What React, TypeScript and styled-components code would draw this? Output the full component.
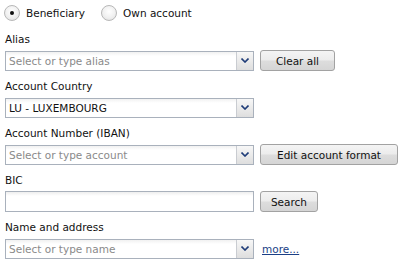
import React, { useState } from 'react';
import styled, { createGlobalStyle } from 'styled-components';

const GlobalStyle = createGlobalStyle`
  body {
    margin: 0;
    background: #fff;
    font-family: "DejaVu Sans", Tahoma, Verdana, sans-serif;
    font-size: 10.5px;
    color: #111;
  }
`;

const Form = styled.div`
  display: flex;
  flex-direction: column;
  padding-left: 5px;
  width: 399px;
`;

const RadioRow = styled.div`
  display: flex;
  align-items: center;
  height: 25px;
  margin-left: -1px;
  gap: 16px;
`;

const RadioOption = styled.label`
  display: flex;
  align-items: center;
  gap: 6px;
  cursor: pointer;
`;

const RadioCircle = styled.span<{ $checked: boolean }>`
  width: 14px;
  height: 14px;
  border-radius: 50%;
  border: 1px solid #b8b8b8;
  background: radial-gradient(circle at 50% 40%, #ffffff 0%, #f0f0f0 55%, #dcdcdc 100%);
  display: flex;
  align-items: center;
  justify-content: center;

  &::after {
    content: '';
    width: 4px;
    height: 4px;
    border-radius: 50%;
    background: #111;
    display: ${(p) => (p.$checked ? 'block' : 'none')};
  }
`;

const Label = styled.div`
  height: 20px;
  line-height: 20px;
  margin-top: 4px;
`;

const Row = styled.div`
  display: flex;
  align-items: center;
  height: 23px;
  gap: 6px;
`;

const Combo = styled.div`
  width: 247px;
  height: 18px;
  border: 1px solid #a9b1bc;
  display: flex;
  background: linear-gradient(#f1f1f1, #ffffff 4px);
`;

const ComboText = styled.div<{ $placeholder?: boolean }>`
  flex: 1;
  padding-left: 3px;
  line-height: 18px;
  color: ${(p) => (p.$placeholder ? '#8a8a8a' : '#111')};
  white-space: nowrap;
  overflow: hidden;
`;

const ComboButton = styled.div`
  width: 16px;
  border-left: 1px solid #c9ccd1;
  background: linear-gradient(#f7f7f7, #dedede);
  display: flex;
  align-items: center;
  justify-content: center;
`;

const TextBox = styled.div`
  width: 247px;
  height: 19px;
  border: 1px solid #a9b1bc;
  background: linear-gradient(#eeeeee, #ffffff 4px);
`;

const Button = styled.button<{ $w: number }>`
  width: ${(p) => p.$w}px;
  height: 21px;
  padding: 0;
  border: 1px solid #a2a2a2;
  border-radius: 3px;
  background: linear-gradient(#f4f4f4 0%, #ececec 48%, #dddddd 52%, #d5d5d5 100%);
  font-family: inherit;
  font-size: 10.5px;
  color: #111;
  cursor: pointer;
`;

const MoreLink = styled.a`
  color: #1b3f86;
  text-decoration: underline;
  margin-left: 2px;
  cursor: pointer;
`;

const Arrow = () => (
  <svg width="8" height="5" viewBox="0 0 8 5">
    <path d="M0.5 0.5 L4 4 L7.5 0.5" fill="none" stroke="#1f3c78" strokeWidth="1.6" />
  </svg>
);

const ComboBox: React.FC<{ value: string; placeholder?: boolean }> = ({ value, placeholder }) => (
  <Combo>
    <ComboText $placeholder={placeholder}>{value}</ComboText>
    <ComboButton>
      <Arrow />
    </ComboButton>
  </Combo>
);

const App: React.FC = () => {
  const [mode, setMode] = useState('beneficiary');

  return (
    <Form>
      <GlobalStyle />
      <RadioRow>
        <RadioOption onClick={() => setMode('beneficiary')}>
          <RadioCircle $checked={mode === 'beneficiary'} />
          Beneficiary
        </RadioOption>
        <RadioOption onClick={() => setMode('own')}>
          <RadioCircle $checked={mode === 'own'} />
          Own account
        </RadioOption>
      </RadioRow>

      <Label>Alias</Label>
      <Row>
        <ComboBox value="Select or type alias" placeholder />
        <Button $w={75}>Clear all</Button>
      </Row>

      <Label>Account Country</Label>
      <Row>
        <ComboBox value="LU - LUXEMBOURG" />
      </Row>

      <Label>Account Number (IBAN)</Label>
      <Row>
        <ComboBox value="Select or type account" placeholder />
        <Button $w={138}>Edit account format</Button>
      </Row>

      <Label>BIC</Label>
      <Row>
        <TextBox />
        <Button $w={58}>Search</Button>
      </Row>

      <Label>Name and address</Label>
      <Row>
        <ComboBox value="Select or type name" placeholder />
        <MoreLink>more...</MoreLink>
      </Row>
    </Form>
  );
};

export default App;
